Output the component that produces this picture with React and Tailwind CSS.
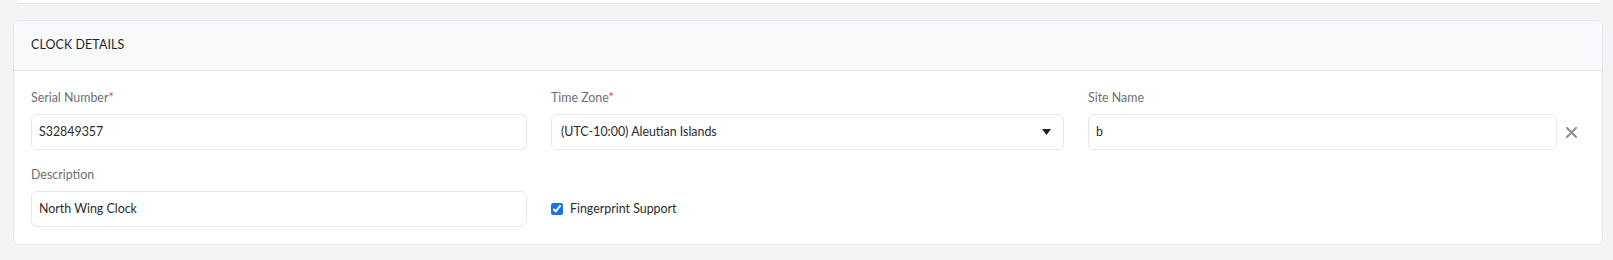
import React from 'react';

const font = { fontFamily: '"Lato", "Open Sans", sans-serif' };

function Label({ children, required }) {
  return (
    <label className="block text-[12.4px] leading-[18px] text-[#6c6f73] mb-[7px]">
      {children}
      {required && <span className="text-[#e5484d]">*</span>}
    </label>
  );
}

function TextInput({ value }) {
  return (
    <div className="h-[36px] w-full flex items-center rounded-[6px] border border-[#e3e8ef] bg-white px-[7px] text-[12.4px] text-[#2b2b2b]">
      {value}
    </div>
  );
}

export default function App() {
  return (
    <div className="w-[1613px] h-[260px] bg-[#f4f4f5] overflow-hidden" style={font}>
      {/* bottom edge of the card above */}
      <div className="ml-[17px] mr-[13px] h-[4px] bg-white border-b border-[#e7e9ec]"></div>

      <div className="mt-[16px] ml-[13px] mr-[10px] rounded-[7px] border border-[#e3e8ef] bg-white overflow-hidden">
        {/* Header */}
        <div className="h-[50px] flex items-center px-[17px] bg-[#f8f9fb] border-b border-[#e3e8ef]">
          <h2 className="text-[12.4px] uppercase text-[#1f2328] tracking-[0.01em]">Clock Details</h2>
        </div>

        {/* Body */}
        <div className="px-[17px] pt-[18px] pb-[17px] grid grid-cols-[496px_513px_1fr] gap-x-[24px] gap-y-[16px]">
          <div>
            <Label required>Serial Number</Label>
            <TextInput value="S32849357" />
          </div>

          <div>
            <Label required>Time Zone</Label>
            <div className="h-[36px] flex items-center justify-between rounded-[6px] border border-[#e3e8ef] bg-white pl-[9px] pr-[12px] text-[12.4px] text-[#2b2b2b]">
              <span>(UTC-10:00) Aleutian Islands</span>
              <svg width="9" height="6" viewBox="0 0 9 6">
                <path d="M0 0 H9 L4.5 6 Z" fill="#222" />
              </svg>
            </div>
          </div>

          <div>
            <Label>Site Name</Label>
            <div className="flex items-center">
              <div className="flex-1">
                <TextInput value="b" />
              </div>
              <button className="w-[28px] h-[36px] flex items-center justify-center">
                <svg width="11" height="11" viewBox="0 0 11 11">
                  <path d="M1 1 L10 10 M10 1 L1 10" stroke="#8b9096" strokeWidth="2" strokeLinecap="round" />
                </svg>
              </button>
            </div>
          </div>

          <div>
            <Label>Description</Label>
            <TextInput value="North Wing Clock" />
          </div>

          <div className="pt-[25px]">
            <label className="h-[36px] flex items-center gap-[7px] text-[12.4px] text-[#2b2b2b]">
              <input type="checkbox" checked readOnly className="w-[12px] h-[12px] m-0 accent-[#1a73e8]" />
              Fingerprint Support
            </label>
          </div>

          <div></div>
        </div>
      </div>
    </div>
  );
}
